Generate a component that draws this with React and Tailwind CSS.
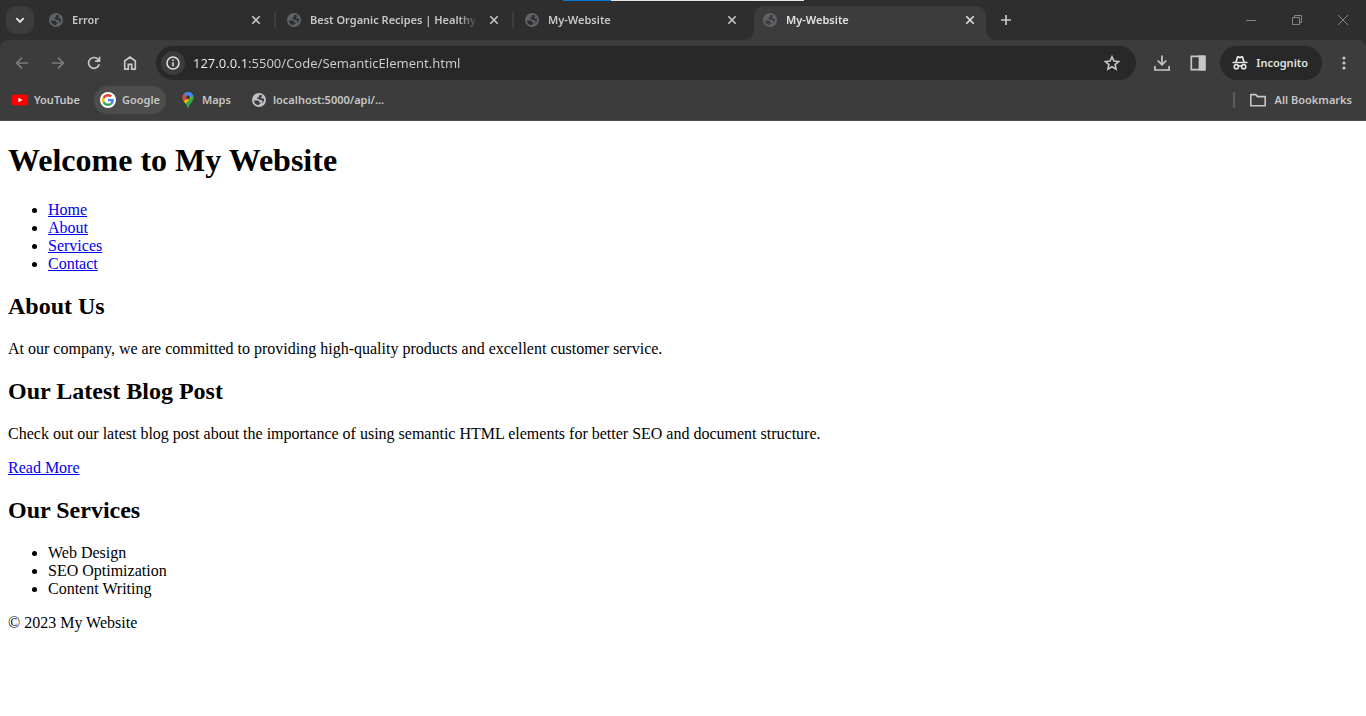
import React from "react";

const ui = "font-['Noto_Sans','Open_Sans',sans-serif]";

function Globe({ className }) {
  return (
    <svg viewBox="0 0 16 16" className={"size-4 shrink-0 " + className} aria-hidden="true">
      <path
        fill="currentColor"
        fillRule="evenodd"
        d="M8 1a7 7 0 1 0 0 14A7 7 0 0 0 8 1ZM3 8.600h3.300c1.200 0 1.800.5 1.800 1.200v.7h1.700v1.300H8.100v1.500C5.300 13.300 3.100 11.400 3 8.600ZM9.200 3c1 0 1.500.3 2.200.9l-1.100 1.200v1.500h2.600c.3 2-.3 3.600-1.400 4.600V9.800c0-1.100-.7-1.700-1.800-1.700H8.300V6.900H6.200V5.400h1.600V4c.3-.7.700-1 1.400-1Z"
      />
    </svg>
  );
}

function CloseIcon() {
  return (
    <svg viewBox="0 0 16 16" className="size-4" fill="none" stroke="currentColor" strokeWidth="1.6" aria-hidden="true">
      <path d="M4.300 4.300l7.400 7.400M11.700 4.300l-7.400 7.400" />
    </svg>
  );
}

function Tab({ title, active, divider }) {
  return (
    <div
      className={
        "relative flex h-[34px] shrink items-center rounded-t-[10px] pr-2 " +
        (active ? "ml-1.5 w-[232px] bg-[#3c3c3c] pl-2 text-[#e3e3e3]" : "w-[238px] pl-[14px] text-[#c7c7c7]")
      }
    >
      {active && (
        <>
          <svg viewBox="0 0 10 10" className="absolute -left-2.5 bottom-0 size-2.5 text-[#3c3c3c]" aria-hidden="true">
            <path fill="currentColor" d="M10 0v10H0A10 10 0 0 0 10 0Z" />
          </svg>
          <svg viewBox="0 0 10 10" className="absolute -right-2.5 bottom-0 size-2.5 text-[#3c3c3c]" aria-hidden="true">
            <path fill="currentColor" d="M0 0v10h10A10 10 0 0 1 0 0Z" />
          </svg>
        </>
      )}
      <button className="flex h-full min-w-0 flex-1 items-center gap-2 pb-1.5 text-left">
        <Globe className="text-[#5f6368]" />
        <span className="min-w-0 flex-1 overflow-hidden whitespace-nowrap pt-px text-[11px] font-semibold [mask-image:linear-gradient(to_right,black_calc(100%-20px),transparent)]">
          {title}
        </span>
      </button>
      <button aria-label={"Close " + title} className="mb-1.5 ml-2">
        <CloseIcon />
      </button>
      {divider && <span className="absolute -right-1 top-1.5 h-4 w-0.5 bg-[#3d3d3d]" />}
    </div>
  );
}

function ToolIcon({ label, className = "", children }) {
  return (
    <button aria-label={label} className={"flex h-9 w-9 shrink-0 items-center justify-center " + className}>
      <svg viewBox="0 0 20 20" className="size-5" fill="none" stroke="currentColor" strokeWidth="1.7" aria-hidden="true">
        {children}
      </svg>
    </button>
  );
}

function Bookmark({ label, className = "gap-1.5", children }) {
  return (
    <a href="#" className={"flex h-7 items-center rounded-full px-1.5 " + className}>
      {children}
      <span className="whitespace-nowrap">{label}</span>
    </a>
  );
}

function YouTube() {
  return (
    <svg viewBox="0 0 16 16" className="size-4" aria-hidden="true">
      <rect y="2.500" width="16" height="11" rx="2.600" fill="#f00" />
      <path d="M6.400 5.700v4.600L10.500 8Z" fill="#fff" />
    </svg>
  );
}

function Google() {
  return (
    <svg viewBox="0 0 16 16" className="size-4" aria-hidden="true">
      <circle cx="8" cy="8" r="8" fill="#fff" />
      <g transform="translate(2 2) scale(.25)">
        <path fill="#EA4335" d="M24 9.500c3.540 0 6.710 1.220 9.210 3.600l6.850-6.850C35.900 2.380 30.470 0 24 0 14.620 0 6.510 5.380 2.560 13.220l7.980 6.190C12.430 13.720 17.740 9.500 24 9.500z" />
        <path fill="#4285F4" d="M46.980 24.550c0-1.570-.15-3.090-.38-4.550H24v9.020h12.940c-.58 2.960-2.260 5.480-4.780 7.180l7.730 6c4.510-4.180 7.090-10.360 7.090-17.650z" />
        <path fill="#FBBC05" d="M10.530 28.590c-.48-1.450-.76-2.990-.76-4.590s.27-3.140.76-4.590l-7.980-6.190C.92 16.460 0 20.120 0 24c0 3.880.92 7.540 2.560 10.780l7.970-6.190z" />
        <path fill="#34A853" d="M24 48c6.480 0 11.930-2.130 15.890-5.810l-7.730-6c-2.150 1.450-4.920 2.300-8.160 2.300-6.260 0-11.570-4.220-13.470-9.910l-7.980 6.190C6.510 42.620 14.620 48 24 48z" />
      </g>
    </svg>
  );
}

function Maps() {
  return (
    <svg viewBox="0 0 16 16" className="size-4" aria-hidden="true">
      <defs>
        <clipPath id="pin">
          <path d="M8 0a5.500 5.500 0 0 0-5.500 5.500c0 2 .9 3.200 2.300 5C6.500 12.600 7.200 13.800 7.500 15.300c.1.900.9.900 1 0 .3-1.500 1-2.700 2.700-4.800 1.400-1.800 2.300-3 2.300-5A5.500 5.500 0 0 0 8 0Z" />
        </clipPath>
      </defs>
      <g clipPath="url(#pin)">
        <path d="M0 0h16v16H0z" fill="#34a853" />
        <path d="M8 5.500 14 0H3Z" fill="#4285f4" />
        <path d="M3.700 2 10.500-3H16v4.500L8 9.500Z" fill="#4285f4" />
        <path d="M0 6.500V0h2L8 5.500 4 10Z" fill="#ea4335" />
        <path d="M8 5.500 1 12l4 1 8-8.500Z" fill="#fbbc04" />
        <path d="M13 3.500 4.500 13 8 16l8-8V4Z" fill="#34a853" />
      </g>
      <circle cx="8" cy="5.500" r="2" fill="#3c3c3c" />
    </svg>
  );
}

function Browser() {
  return (
    <header className={"bg-[#2e2e2e] text-[#c7c7c7] " + ui}>
      <div className="relative flex h-10 items-start pt-1.5">
        <div className="absolute left-[563px] top-0 flex h-px w-[241px] bg-[#e6e6e6]">
          <span className="h-px w-12 bg-[#0078d4]" />
        </div>
        <button aria-label="Search tabs" className="ml-1.5 flex size-7 shrink-0 items-center justify-center rounded-[10px] bg-[#3c3c3c] text-[#e3e3e3]">
          <svg viewBox="0 0 16 16" className="size-4" fill="none" stroke="currentColor" strokeWidth="1.900" aria-hidden="true">
            <path d="M4.300 6.200 8 9.900l3.700-3.700" />
          </svg>
        </button>
        <nav aria-label="Tabs" className="flex min-w-0">
          <Tab title="Error" divider />
          <Tab title="Best Organic Recipes | Healthy" divider />
          <Tab title="My-Website" />
          <Tab title="My-Website" active />
        </nav>
        <button aria-label="New tab" className="ml-1.5 flex size-7 shrink-0 items-center justify-center">
          <svg viewBox="0 0 16 16" className="size-4" fill="none" stroke="currentColor" strokeWidth="1.700" aria-hidden="true">
            <path d="M8 3v10M3 8h10" />
          </svg>
        </button>
        <div className="ml-auto flex h-7 shrink-0 text-[#858585]">
          <button aria-label="Minimize" className="flex w-[46px] items-center justify-center">
            <svg viewBox="0 0 10 10" className="size-2.5" fill="none" stroke="currentColor" aria-hidden="true"><path d="M0 5.500h10" /></svg>
          </button>
          <button aria-label="Restore" className="flex w-[46px] items-center justify-center">
            <svg viewBox="0 0 10 10" className="size-2.5" fill="none" stroke="currentColor" aria-hidden="true"><path d="M.5 2.500h7v7h-7zM2.500 2.500v-2h7v7h-2" /></svg>
          </button>
          <button aria-label="Close window" className="flex w-[46px] items-center justify-center">
            <svg viewBox="0 0 10 10" className="size-2.5" fill="none" stroke="currentColor" aria-hidden="true"><path d="M0 0l10 10M10 0 0 10" /></svg>
          </button>
        </div>
      </div>

      <div className="rounded-t-[8px] border-b border-[#4a4a4a] bg-[#3c3c3c] pt-1.5">
        <div className="flex h-[34px] items-center px-1">
          <ToolIcon label="Back" className="text-[#7c7c7c]"><path d="M16 10H4.800M10 4.700 4.700 10l5.300 5.300" /></ToolIcon>
          <ToolIcon label="Forward" className="text-[#7c7c7c]"><path d="M4 10h11.200M10 4.700l5.300 5.300-5.300 5.300" /></ToolIcon>
          <ToolIcon label="Reload"><path d="M15.200 11.300A5.400 5.400 0 1 1 14 6.300l1.400 1.500M15.500 3.800v4.400h-4.400" /></ToolIcon>
          <ToolIcon label="Home"><path d="M4.700 16.200V8L10 4l5.300 4v8.200h-3.600v-4.900H8.300v4.900Z" /></ToolIcon>
          <div className="ml-2 flex h-[34px] min-w-0 flex-1 items-center rounded-full bg-[#282828] pl-[5px] pr-[14px]">
            <button aria-label="View site information" className="flex size-6 shrink-0 items-center justify-center rounded-full bg-[#3c3c3c] text-[#e3e3e3]">
              <svg viewBox="0 0 16 16" className="size-4" fill="none" stroke="currentColor" strokeWidth="1.500" aria-hidden="true">
                <circle cx="8" cy="8" r="6" /><path d="M8 7.300v4M8 4.600v1.500" />
              </svg>
            </button>
            <input
              type="text"
              aria-label="Address"
              defaultValue="127.0.0.1:5500/Code/SemanticElement.html"
              className="ml-2 h-6 min-w-0 flex-1 bg-[linear-gradient(to_right,#f0f0f0_54px,#cfcfcf_54px)] bg-clip-text text-[13px] text-transparent outline-none"
            />
            <button aria-label="Bookmark this tab">
              <svg viewBox="0 0 20 20" className="size-5" fill="none" stroke="currentColor" strokeWidth="1.600" aria-hidden="true">
                <path d="m10 3.700 1.900 4.300 4.700.5-3.500 3.100 1 4.600-4.100-2.400-4.100 2.400 1-4.600-3.500-3.100L8.100 8Z" />
              </svg>
            </button>
          </div>
          <ToolIcon label="Downloads" className="ml-2"><path d="M10 2.500v9M5.700 7.500l4.300 4.300 4.300-4.300M2.900 13v4h14.200v-4" /></ToolIcon>
          <ToolIcon label="Side panel"><path d="M3.300 3.300h13.400v13.400H3.300z" /><path d="M11.500 3.300h5.200v13.400h-5.200z" fill="currentColor" /></ToolIcon>
          <button className="ml-1 flex h-[34px] shrink-0 items-center gap-1.5 rounded-full bg-[#282828] pl-2.5 pr-[14px] text-[11px] font-semibold text-[#e3e3e3]">
            <svg viewBox="0 0 20 20" className="size-5" fill="none" stroke="currentColor" strokeWidth="1.600" aria-hidden="true">
              <path fill="currentColor" stroke="none" fillRule="evenodd" d="M2.500 8.700h2.700L6.800 3.600c.2-.6.700-.8 1.300-.6l1.900.6 1.900-.6c.6-.2 1.100 0 1.300.6l1.600 5.100h2.700v1.600h-15ZM7 8.700h6l-1.100-3.800-1.900.6-1.900-.6Z" />
              <circle cx="6.300" cy="13.700" r="2.100" /><circle cx="13.700" cy="13.700" r="2.100" /><path d="M8.300 13.200q1.700-.8 3.400 0" />
            </svg>
            Incognito
          </button>
          <button aria-label="Menu" className="ml-1 flex h-9 w-9 shrink-0 items-center justify-center">
            <svg viewBox="0 0 20 20" className="size-5" fill="currentColor" aria-hidden="true"><circle cx="10" cy="5" r="1.600" /><circle cx="10" cy="10" r="1.600" /><circle cx="10" cy="15" r="1.600" /></svg>
          </button>
        </div>
        <nav aria-label="Bookmarks" className="flex h-10 items-center gap-2 pl-1.5 pr-2 text-[11px] font-semibold">
          <Bookmark label="YouTube"><YouTube /></Bookmark>
          <Bookmark label="Google" className="gap-1.5 bg-[#4d4d4d]"><Google /></Bookmark>
          <Bookmark label="Maps"><Maps /></Bookmark>
          <Bookmark label="localhost:5000/api/..."><Globe className="text-[#bdc1c6]" /></Bookmark>
          <span className="ml-auto h-4 w-0.5 bg-[#5c5c5c]" />
          <Bookmark label="All Bookmarks" className="gap-2">
            <svg viewBox="0 0 18 16" className="h-4 w-[18px]" fill="none" stroke="currentColor" strokeWidth="1.600" strokeLinejoin="round" aria-hidden="true">
              <path d="M1.800 2.600h5l1.800 2h7.600v9.200H1.800Z" />
            </svg>
          </Bookmark>
        </nav>
      </div>
    </header>
  );
}

function Link({ children }) {
  return <a href="#" className="text-[#0000ee] underline">{children}</a>;
}

export default function App() {
  return (
    <div className="min-h-screen bg-white">
      <Browser />
      <div className="px-2 font-['Liberation_Serif',serif] text-base leading-[18px] text-black">
        <header>
          <h1 className="pb-[22px] pt-[21px] text-[32px] font-bold leading-[37px]">Welcome to My Website</h1>
          <nav>
            <ul className="list-disc pl-10">
              <li><Link>Home</Link></li>
              <li><Link>About</Link></li>
              <li><Link>Services</Link></li>
              <li><Link>Contact</Link></li>
            </ul>
          </nav>
        </header>
        <main>
          <section>
            <h2 className="py-5 text-2xl font-bold leading-[27px]">About Us</h2>
            <p>At our company, we are committed to providing high-quality products and excellent customer service.</p>
          </section>
          <article>
            <h2 className="py-5 text-2xl font-bold leading-[27px]">Our Latest Blog Post</h2>
            <p>Check out our latest blog post about the importance of using semantic HTML elements for better SEO and document structure.</p>
            <p className="mt-4"><Link>Read More</Link></p>
          </article>
          <section>
            <h2 className="py-5 text-2xl font-bold leading-[27px]">Our Services</h2>
            <ul className="list-disc pl-10">
              <li>Web Design</li>
              <li>SEO Optimization</li>
              <li>Content Writing</li>
            </ul>
          </section>
        </main>
        <footer className="mt-4"><p>© 2023 My Website</p></footer>
      </div>
    </div>
  );
}
